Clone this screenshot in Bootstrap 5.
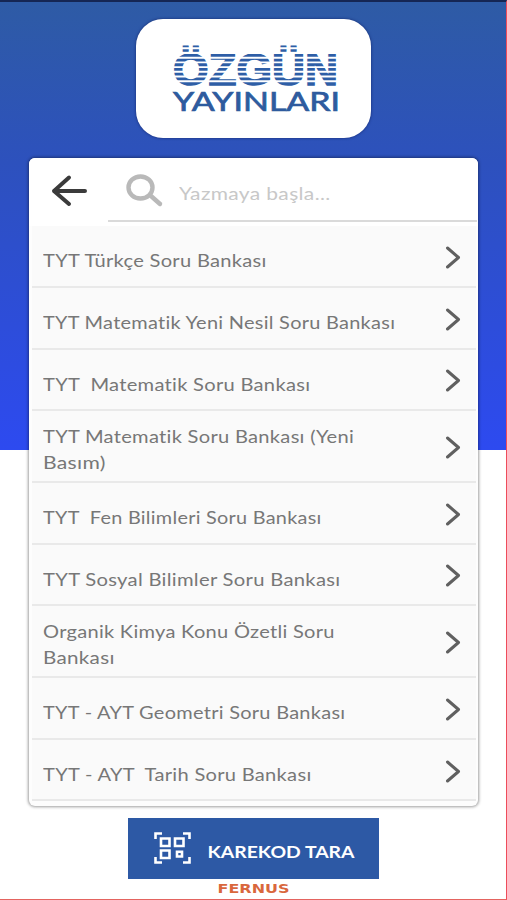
<!DOCTYPE html>
<html lang="tr">
<head>
<meta charset="utf-8">
<meta name="viewport" content="width=device-width, initial-scale=1">
<title>Özgün Yayınları</title>
<link href="https://cdn.jsdelivr.net/npm/bootstrap@5.3.0/dist/css/bootstrap.min.css" rel="stylesheet">
<style>
body{font-family:Lato,"Open Sans",sans-serif;background:#fff}
.screen{height:900px;border-top:2px solid #152654;border-right:1px solid #ee4c5a;border-bottom:1px solid #e46460;background:linear-gradient(#2e5ba5 0,#2d51bd 160px,#2d4af0 448px,#fff 448px) padding-box;overflow:hidden}
.brand{width:235px;height:119px;margin-top:17px;border-radius:27px;background:#fff;box-shadow:0 0 3px #14286e}
.panel{width:449px;height:648px;margin-top:20px;padding:0 2px 0 3px;border-radius:6px;background:#fdfdfd;box-shadow:0 0 3px 1px rgba(0,0,0,.38)}
.searchbar{height:68px;margin:0 -2px 0 -3px;border-radius:6px 6px 0 0;background:#fff}
.back{margin-left:22px}
.field{width:369px;height:64px;margin-left:20px;border-bottom:2px solid #dadada}
.field input{font-size:18px;letter-spacing:.3px;outline:0;padding:8px 0 0;width:220px;transform:scaleX(1.165);transform-origin:0 0}
.field input::placeholder{color:#c8c8c8;opacity:1}
.books .book,.books .book:last-child{height:61.75px;padding:0 14px 0 11.5px;border-width:0 0 2px;border-color:#e9e9e9;background:#fafafa;color:#777;font-size:17.8px;line-height:26px}
.books .book.tall{height:71.6px}
.book span{padding-top:9px}
.book.tall span{padding-top:6px}
.book svg{margin-top:2px}
.book b{display:inline-block;white-space:pre;transform-origin:0 0;letter-spacing:.25px}
.scan{width:251px;height:61px;margin:12px 0 0 1px;background:#2d59a5;color:#fff;border-radius:0;border:0;padding:0 0 0 26px}
.maker{line-height:0}
</style>
</head>
<body>
<main class="screen d-flex flex-column align-items-center">
<header class="brand flex-shrink-0">
<svg width="235" height="119" viewBox="0 0 235 119" aria-label="Özgün Yayınları">
<text x="37" y="65.500" font-family="Liberation Sans" font-weight="700" font-size="44" textLength="165" lengthAdjust="spacingAndGlyphs" fill="#2e5ea6" stroke="#2e5ea6" stroke-width="1.600">ÖZGÜN</text>
<path stroke="#fff" stroke-width="1.900" d="M30 29.300H210M30 34H210M30 38.700H210M30 43.400H210M30 48.100H210M30 52.800H210M30 57.500H210M30 62.200H210"/>
<text x="37" y="91.500" font-family="Lato" font-weight="400" font-size="26.500" textLength="167" lengthAdjust="spacingAndGlyphs" fill="#2e5b9e" stroke="#2e5b9e" stroke-width=".7">YAYINLARI</text>
</svg>
</header>
<section class="panel flex-shrink-0">
<div class="searchbar d-flex">
<svg class="back flex-shrink-0" width="37" height="66" fill="none" stroke="#3b3b3b" stroke-width="4" stroke-linecap="round" stroke-linejoin="round"><path d="M34 33H3M18 19.500L3 33L18 46"/></svg>
<div class="field d-flex">
<svg class="flex-shrink-0" width="71" height="61" fill="none" stroke="#b9b9b9" stroke-width="4.400"><ellipse cx="32.500" cy="29.500" rx="12" ry="11"/><path stroke-linecap="round" d="M43 38L52 46"/></svg>
<input class="border-0 bg-transparent" type="text" placeholder="Yazmaya başla...">
</div>
</div>
<div class="books list-group list-group-flush" id="books"></div>
</section>
<button class="scan btn d-flex align-items-center flex-shrink-0">
<svg width="37" height="33" fill="none" stroke="#fff" stroke-width="2.600"><path d="M1.500 7V1.500H8M29 1.500H35.500V7M1.500 25V30.500H8M29 30.500H35.500V25M7 6.500H15.500V14H7ZM21 6.500H29.500V14H21ZM7 18.500H15.500V26H7ZM23 19.800H28V24.500H23Z"/></svg>
<svg class="ms-auto" width="172" height="40"><text x="0.500" y="28.500" font-family="Lato" font-weight="700" font-size="17.500" fill="#fff" textLength="147" lengthAdjust="spacingAndGlyphs">KAREKOD TARA</text></svg>
</button>
<footer class="maker"><svg width="74" height="17"><text x="1.500" y="14" font-family="DejaVu Sans" font-weight="700" font-size="12" fill="#d9673d" textLength="72" lengthAdjust="spacingAndGlyphs">FERNUS</text></svg></footer>
</main>
<script>
// Each title is a list of lines paired with the width that line should occupy.
const titles = [
  [["TYT Türkçe Soru Bankası",224]],
  [["TYT Matematik Yeni Nesil Soru Bankası",352]],
  [["TYT  Matematik Soru Bankası",267]],
  [["TYT Matematik Soru Bankası (Yeni",311],["Basım)",63]],
  [["TYT  Fen Bilimleri Soru Bankası",279]],
  [["TYT Sosyal Bilimler Soru Bankası",297]],
  [["Organik Kimya Konu Özetli Soru",292],["Bankası",72]],
  [["TYT - AYT Geometri Soru Bankası",302]],
  [["TYT - AYT  Tarih Soru Bankası",268]]
];
const list = document.getElementById("books");
for (const lines of titles) {
  const row = document.createElement("a");
  row.className = "book list-group-item list-group-item-action d-flex align-items-center justify-content-between" + (lines.length > 1 ? " tall" : "");
  const label = document.createElement("span");
  for (const [text, width] of lines) {
    const line = document.createElement("div");
    const run = document.createElement("b");
    run.className = "fw-normal";
    run.textContent = text;
    line.append(run);
    line.dataset.width = width;
    label.append(line);
  }
  row.append(label);
  row.insertAdjacentHTML("beforeend", '<svg class="flex-shrink-0" width="18" height="24" fill="none" stroke="#606060" stroke-width="3" stroke-linecap="round" stroke-linejoin="round"><path d="M3.500 3L14.500 12.500L3.500 22"/></svg>');
  list.append(row);
}
for (const line of list.querySelectorAll("[data-width]")) {
  const run = line.firstChild;
  run.style.transform = `scaleX(${line.dataset.width / run.offsetWidth})`;
}
</script>
<script src="https://cdn.jsdelivr.net/npm/bootstrap@5.3.0/dist/js/bootstrap.bundle.min.js"></script>
</body>
</html>
